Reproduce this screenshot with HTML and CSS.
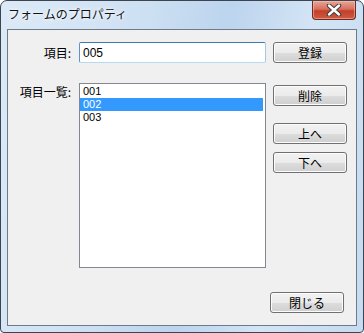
FILE: index.html
```html
<!DOCTYPE html>
<html lang="ja">
<head>
    <meta charset="UTF-8">
    <meta name="viewport" content="width=device-width, initial-scale=1.0">
    <title>フォームのプロパティ</title>
    <link rel="stylesheet" href="styles.css">
</head>
<body>
    <div class="window">
        <div class="titlebar">
            <span class="title">フォームのプロパティ</span>
            <button class="close-btn" aria-label="閉じる">
                <svg width="16" height="12" viewBox="0 0 16 12">
                    <path d="M3 1.5 L13 10.5 M13 1.5 L3 10.5" stroke="#3b3b3b" stroke-width="4.4" stroke-linecap="round"/>
                    <path d="M3 1.5 L13 10.5 M13 1.5 L3 10.5" stroke="#ffffff" stroke-width="2.4" stroke-linecap="round"/>
                </svg>
            </button>
        </div>
        <div class="client">
            <div class="row row-item">
                <label class="label" for="itemName">項目:</label>
                <input class="text-box" id="itemName" type="text" value="005">
                <button class="btn">登録</button>
            </div>
            <div class="row row-list">
                <span class="label">項目一覧:</span>
                <ul class="list-box">
                    <li>001</li>
                    <li class="selected">002</li>
                    <li>003</li>
                </ul>
                <div class="side-buttons">
                    <button class="btn btn-delete">削除</button>
                    <button class="btn btn-up">上へ</button>
                    <button class="btn btn-down">下へ</button>
                </div>
            </div>
            <div class="footer">
                <button class="btn">閉じる</button>
            </div>
        </div>
    </div>
</body>
</html>
```

FILE: styles.css
```css
body {
    margin: 0;
    font-family: "Noto Sans CJK JP", sans-serif;
    font-size: 12px;
    color: #000;
    background-color: #fff;
}
.window {
    width: 364px;
    height: 333px;
    box-sizing: border-box;
    border: 1px solid #3c4450;
    border-radius: 7px 7px 4px 4px;
    padding: 0 6px 6px;
    background: linear-gradient(100deg, #dceaf7 0%, #cde0f3 35%, #bcd4ee 55%, #d3e4f5 75%, #c6dbf1 100%);
    display: flex;
    flex-direction: column;
}
.titlebar {
    height: 28px;
    display: flex;
    justify-content: space-between;
    align-items: flex-start;
}
.title {
    margin-top: 5px;
    margin-left: 1px;
    font-size: 12px;
    line-height: 16px;
    color: #111;
    text-shadow: 0 0 6px #fff, 0 0 3px #fff;
}
.close-btn {
    width: 44px;
    height: 19px;
    margin-right: 1px;
    padding: 0;
    border: 1px solid #6b2a22;
    border-top: none;
    border-radius: 0 0 4px 4px;
    background: linear-gradient(#e9a596 0%, #d7705d 45%, #c2402b 55%, #cf5a40 100%);
    box-shadow: inset 0 0 0 1px rgba(255, 200, 190, 0.5);
    display: flex;
    align-items: center;
    justify-content: center;
}
.client {
    flex: 1;
    border: 1px solid #6f7a88;
    background-color: #f0f0f0;
    display: flex;
    flex-direction: column;
    padding-top: 12px;
}
.row {
    display: flex;
}
.row-item {
    align-items: center;
}
.label {
    width: 63px;
    text-align: right;
    padding-right: 8px;
    flex-shrink: 0;
    line-height: 16px;
}
.text-box {
    width: 187px;
    height: 21px;
    box-sizing: border-box;
    margin: 0;
    padding: 0 3px;
    font-family: "Liberation Sans", "Noto Sans CJK JP", sans-serif;
    font-size: 12px;
    border: 1px solid;
    border-color: #3d7bad #a4c9e3 #b7d9ed #5c93c9;
    border-radius: 2px;
    outline: none;
    background: #fff;
}
.btn {
    width: 74px;
    height: 21px;
    margin: 0 0 0 7px;
    padding: 0;
    font-family: "Noto Sans CJK JP", sans-serif;
    font-size: 12px;
    line-height: 16px;
    color: #000;
    border: 1px solid #707070;
    border-radius: 3px;
    background: linear-gradient(#f2f2f2 0%, #ebebeb 50%, #dddddd 51%, #cfcfcf 100%);
    box-shadow: inset 0 0 0 1px #fcfcfc;
}
.row-list {
    margin-top: 20px;
    align-items: flex-start;
}
.row-list .label {
    margin-top: 1px;
}
.list-box {
    width: 187px;
    height: 185px;
    box-sizing: border-box;
    margin: 0;
    padding: 1px 0 0;
    list-style: none;
    border: 1px solid #828790;
    background: #fff;
    font-family: "Liberation Sans", "Noto Sans CJK JP", sans-serif;
    font-size: 11px;
}
.list-box li {
    height: 13px;
    line-height: 13px;
    padding-left: 3px;
    margin-right: 2px;
}
.list-box li.selected {
    background-color: #3399ff;
    color: #fff;
}
.side-buttons {
    display: flex;
    flex-direction: column;
}
.btn-delete {
    margin-top: 2px;
}
.btn-up {
    margin-top: 17px;
}
.btn-down {
    margin-top: 8px;
}
.footer {
    margin-top: auto;
    display: flex;
    justify-content: flex-end;
    padding: 0 12px 12px 0;
}
```
